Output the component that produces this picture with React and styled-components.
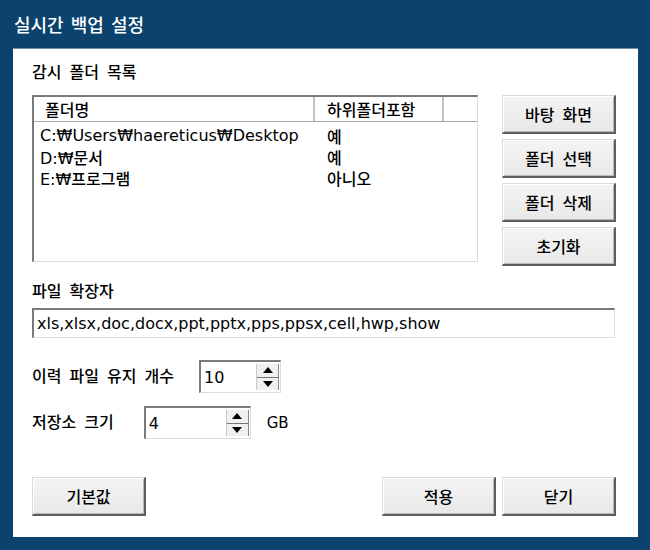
import React from "react";
import styled, { createGlobalStyle } from "styled-components";

const GlobalStyle = createGlobalStyle`
  html, body {
    margin: 0;
    padding: 0;
    background: #0b426e;
  }
  body {
    font-family: "DejaVu Sans", "Noto Sans CJK KR", sans-serif;
  }
`;

const Window = styled.div`
  width: 650px;
  height: 550px;
  background: #0b426e;
  display: flex;
  flex-direction: column;
  box-sizing: border-box;
`;

const TitleBar = styled.div`
  height: 48px;
  display: flex;
  align-items: center;
  padding-left: 14px;
  color: #fff;
  font-family: "Noto Sans CJK KR", sans-serif;
  font-size: 18px;
  font-weight: 500;
  word-spacing: 3px;
  flex-shrink: 0;
`;

const Client = styled.div`
  flex: 1;
  margin: 0 12px 13px 13px;
  background: #fff;
  border-top: 1px solid #6d8fae;
  padding: 13px 22px 21px 19px;
  display: flex;
  flex-direction: column;
  color: #000;
  font-size: 16px;
  font-weight: 500;
`;

const Label = styled.div`
  font-size: 16px;
  line-height: 22px;
  word-spacing: 3px;
  margin-top: ${(p) => p.$top || 0}px;
  margin-bottom: ${(p) => p.$bottom || 0}px;
  margin-right: ${(p) => p.$right || 0}px;
  white-space: nowrap;
`;

const TopRow = styled.div`
  display: flex;
  gap: 24px;
  align-items: flex-start;
`;

const sunken = `
  border-style: solid;
  border-width: 2px 1px 1px 2px;
  border-color: #7a7a7a #dcdcdc #dcdcdc #7a7a7a;
  background: #fff;
  box-sizing: border-box;
`;

const ListBox = styled.div`
  ${sunken}
  width: 446px;
  height: 167px;
  overflow: hidden;
`;

const Grid = styled.div`
  display: grid;
  grid-template-columns: 281px 129px 1fr;
`;

const HeaderRow = styled(Grid)`
  height: 25px;
  border-bottom: 1px solid #a8a8a8;
  box-sizing: border-box;
`;

const HeadCell = styled.div`
  display: flex;
  align-items: center;
  padding-left: ${(p) => p.$pad}px;
  border-right: 2px solid #c4c4c4;
  font-size: 16px;
  white-space: nowrap;
  overflow: hidden;
  &:last-child {
    border-right: none;
  }
`;

const Body = styled.div`
  padding-top: 3px;
`;

const Row = styled(Grid)`
  height: 21px;
  align-items: center;
  font-size: 16px;
  white-space: nowrap;
`;

const Cell = styled.div`
  padding-left: ${(p) => p.$pad}px;
  overflow: hidden;
`;

const ButtonCol = styled.div`
  display: flex;
  flex-direction: column;
  gap: 5px;
`;

const Button = styled.button`
  width: 114px;
  height: 39px;
  font-family: "DejaVu Sans", "Noto Sans CJK KR", sans-serif;
  font-size: 16px;
  font-weight: 500;
  word-spacing: 3px;
  color: #000;
  background: linear-gradient(#f4f4f4, #e8e8e8);
  border-style: solid;
  border-width: 1px 2px 2px 1px;
  border-color: #dadada #5e5e5e #5e5e5e #dadada;
  box-shadow: inset 1px 1px 0 #fff, inset -1px -1px 0 #b8b8b8;
  padding: 0;
  cursor: default;
`;

const TextField = styled.div`
  ${sunken}
  width: 583px;
  height: 30px;
  display: flex;
  align-items: center;
  padding-left: 3px;
  font-size: 16px;
  white-space: nowrap;
`;

const FieldRow = styled.div`
  display: flex;
  align-items: center;
  gap: 16px;
  margin-top: ${(p) => p.$top}px;
`;

const SpinBox = styled.div`
  ${sunken}
  width: ${(p) => p.$width}px;
  height: 33px;
  display: flex;
  align-items: stretch;
`;

const SpinValue = styled.div`
  flex: 1;
  display: flex;
  align-items: center;
  padding-left: 3px;
  font-size: 16px;
`;

const SpinButtons = styled.div`
  width: 22px;
  margin: 2px 1px 2px 0;
  display: flex;
  flex-direction: column;
  border-left: 1px solid #c8c8c8;
  background: #f0f0f0;
`;

const SpinHalf = styled.div`
  flex: 1;
  display: flex;
  align-items: center;
  justify-content: center;
  border-bottom: ${(p) => (p.$up ? "1px solid #777" : "none")};
  border-right: 1px solid #8a8a8a;
`;

const Unit = styled.span`
  font-size: 15px;
`;

const BottomRow = styled.div`
  margin-top: auto;
  display: flex;
  gap: 6px;
`;

const Spacer = styled.div`
  flex: 1;
`;

const Arrow = ({ up }) => (
  <svg width="10" height="6" viewBox="0 0 10 6">
    <polygon points={up ? "5,0 10,6 0,6" : "0,0 10,0 5,6"} fill="#000" />
  </svg>
);

const Spin = ({ value, width }) => (
  <SpinBox $width={width}>
    <SpinValue>{value}</SpinValue>
    <SpinButtons>
      <SpinHalf $up>
        <Arrow up />
      </SpinHalf>
      <SpinHalf>
        <Arrow />
      </SpinHalf>
    </SpinButtons>
  </SpinBox>
);

const folders = [
  { path: "C:₩Users₩haereticus₩Desktop", sub: "예" },
  { path: "D:₩문서", sub: "예" },
  { path: "E:₩프로그램", sub: "아니오" },
];

export default function App() {
  return (
    <>
      <GlobalStyle />
      <Window>
        <TitleBar>실시간 백업 설정</TitleBar>
        <Client>
          <Label $bottom={11}>감시 폴더 목록</Label>
          <TopRow>
            <ListBox>
              <HeaderRow>
                <HeadCell $pad={11}>폴더명</HeadCell>
                <HeadCell $pad={12}>하위폴더포함</HeadCell>
                <HeadCell $pad={0} />
              </HeaderRow>
              <Body>
                {folders.map((f) => (
                  <Row key={f.path}>
                    <Cell $pad={6}>{f.path}</Cell>
                    <Cell $pad={12}>{f.sub}</Cell>
                    <Cell $pad={0} />
                  </Row>
                ))}
              </Body>
            </ListBox>
            <ButtonCol>
              <Button>바탕 화면</Button>
              <Button>폴더 선택</Button>
              <Button>폴더 삭제</Button>
              <Button>초기화</Button>
            </ButtonCol>
          </TopRow>

          <Label $top={15} $bottom={5}>파일 확장자</Label>
          <TextField>xls,xlsx,doc,docx,ppt,pptx,pps,ppsx,cell,hwp,show</TextField>

          <FieldRow $top={22}>
            <Label $right={9}>이력 파일 유지 개수</Label>
            <Spin value="10" width={82} />
          </FieldRow>

          <FieldRow $top={13}>
            <Label $right={14}>저장소 크기</Label>
            <Spin value="4" width={107} />
            <Unit>GB</Unit>
          </FieldRow>

          <BottomRow>
            <Button>기본값</Button>
            <Spacer />
            <Button>적용</Button>
            <Button>닫기</Button>
          </BottomRow>
        </Client>
      </Window>
    </>
  );
}
